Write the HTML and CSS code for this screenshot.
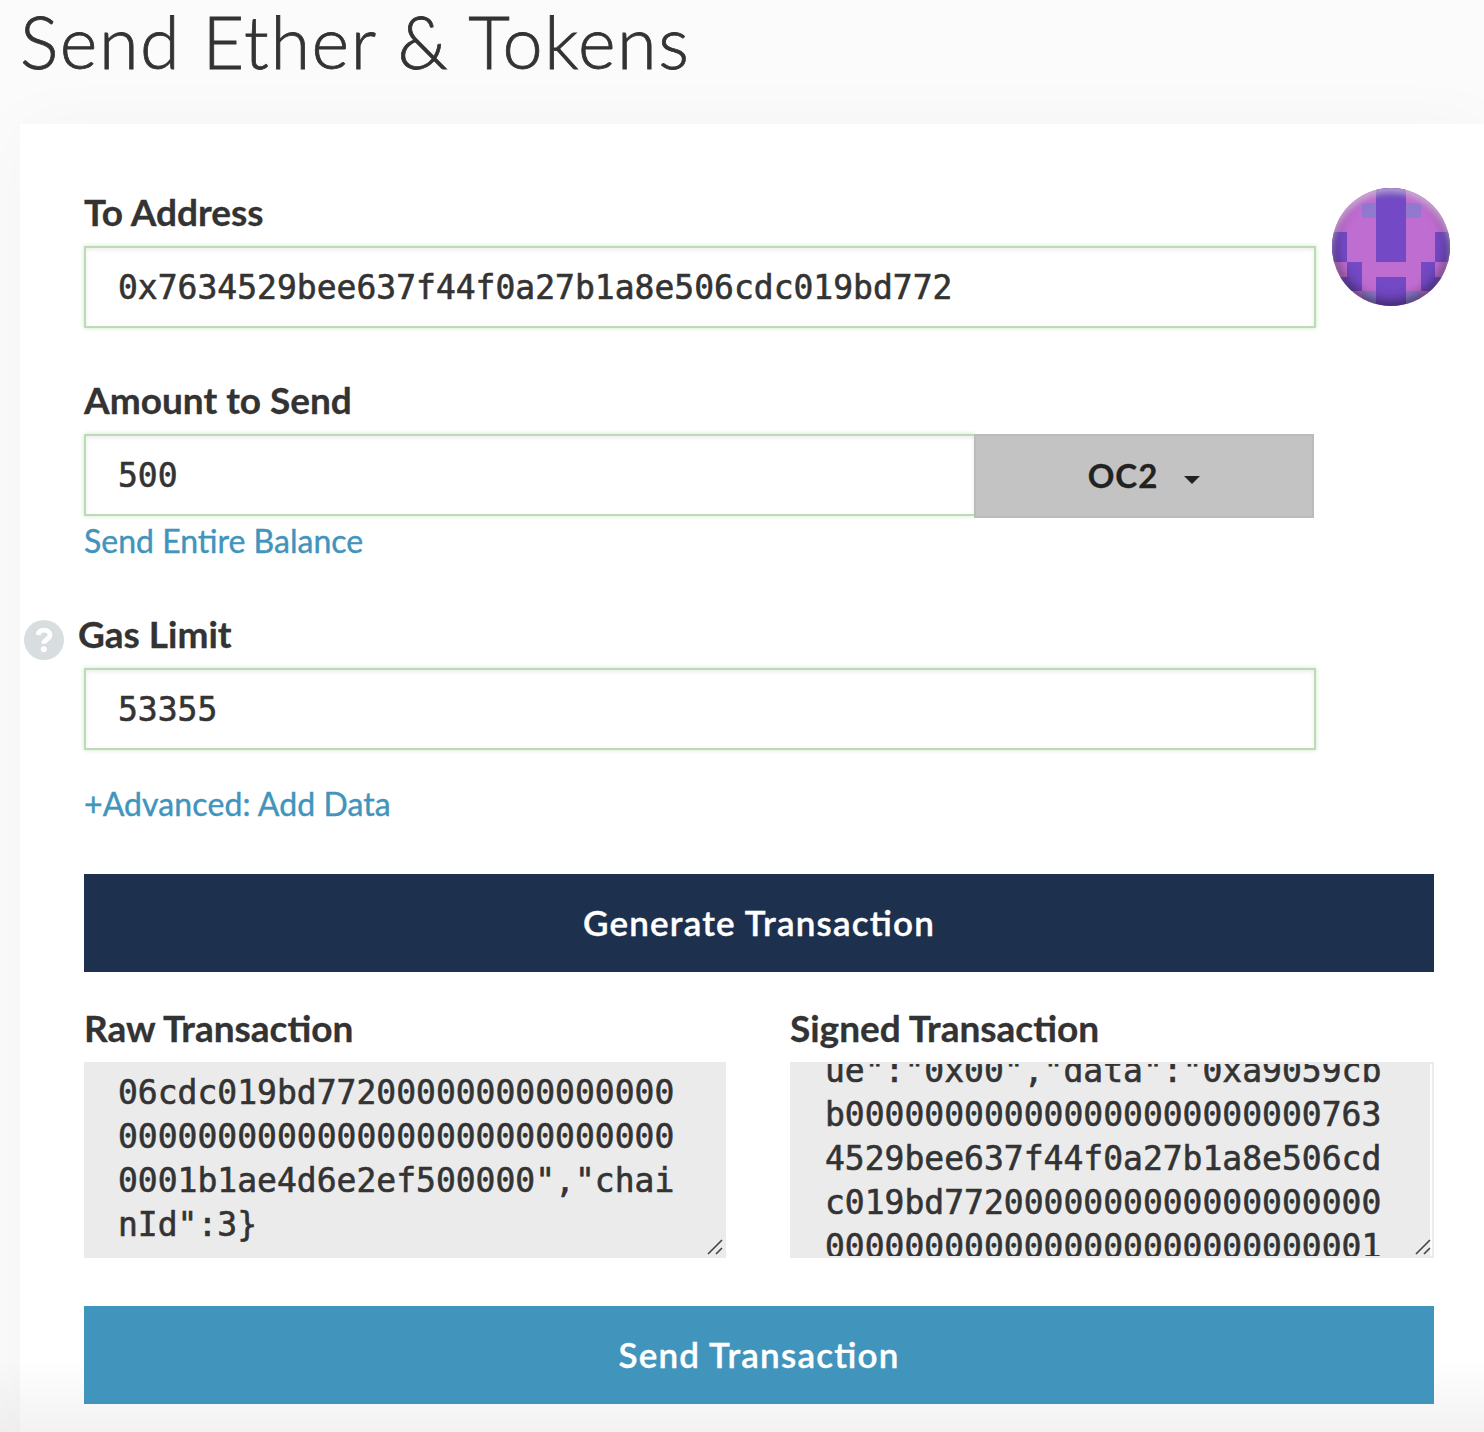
FILE: index.html
```
<!DOCTYPE html>
<html lang="en">
  <head>
    <meta charset="UTF-8" />
    <meta name="viewport" content="width=device-width, initial-scale=1.0" />
    <title>Send Ether &amp; Tokens</title>
    <link rel="stylesheet" href="styles.css">
  </head>
  <body>
    <h1 class="page-title">Send Ether &amp; Tokens</h1>
    <main class="pane">
      <div class="address-row">
        <div class="field">
          <label class="label" for="address">To Address</label>
          <input class="input" id="address" type="text" spellcheck="false" value="0x7634529bee637f44f0a27b1a8e506cdc019bd772" />
        </div>
        <div class="identicon">
          <svg viewBox="0 0 8 8" shape-rendering="crispEdges">
            <rect width="8" height="8" fill="#c06dd2" />
            <path fill="#7349c5" d="M3 0h2v5H3zM0 3h1v2H0zM7 3h1v2H7zM1 5h1v2H0V6h1zM6 5h1v1h1v1H6zM3 6h2v2H3z" />
            <path fill="#9079cf" d="M2 1h1v1H2zM5 1h1v1H5zM2 7h1v1H2zM5 7h1v1H5z" />
          </svg>
        </div>
      </div>

      <div class="amount">
        <label class="label" for="amount">Amount to Send</label>
        <div class="input-group">
          <input class="input" id="amount" type="text" value="500" />
          <button class="unit" type="button"><span>OC2</span> <span class="caret"></span></button>
        </div>
        <a class="link">Send Entire Balance</a>
      </div>

      <div class="gas">
        <div class="gas-head">
          <svg class="help" viewBox="0 0 40 40">
            <circle cx="20" cy="20" r="20" fill="#d8dee0" />
            <path d="M14.200 15C14.600 11.800 17 10.200 20 10.200c3.600 0 6 1.900 6 4.800 0 4.300-6.200 4.100-6.200 8.800" fill="none" stroke="#fff" stroke-width="4.800" />
            <circle cx="19.800" cy="29.300" r="3" fill="#fff" />
          </svg>
          <label class="label" for="gas">Gas Limit</label>
        </div>
        <input class="input" id="gas" type="text" value="53355" />
      </div>

      <a class="link advanced">+Advanced: Add Data</a>

      <button class="btn btn-primary" type="button">Generate Transaction</button>

      <div class="tx-row">
        <div class="tx">
          <div class="label">Raw Transaction</div>
          <div class="output">
            <pre class="output-text">06cdc019bd772000000000000000
0000000000000000000000000000
0001b1ae4d6e2ef500000","chai
nId":3}</pre>
            <svg class="grip" viewBox="0 0 16 16"><path d="M1 15L15 1M9 15l6-6" stroke="#444" stroke-width="1.600" /></svg>
          </div>
        </div>
        <div class="tx">
          <div class="label">Signed Transaction</div>
          <div class="output scrolled">
            <pre class="output-text">ue":"0x00","data":"0xa9059cb
b000000000000000000000000763
4529bee637f44f0a27b1a8e506cd
c019bd7720000000000000000000
0000000000000000000000000001</pre>
            <svg class="grip" viewBox="0 0 16 16"><path d="M1 15L15 1M9 15l6-6" stroke="#444" stroke-width="1.600" /></svg>
          </div>
        </div>
      </div>

      <button class="btn btn-send" type="button">Send Transaction</button>
    </main>
  </body>
</html>
```
FILE: styles.css
```
* {
  box-sizing: border-box;
}
body {
  margin: 0;
  height: 1432px;
  overflow: hidden;
  background: linear-gradient(#fbfbfb 1360px, #efefef 1432px);
  color: #333;
  font-family: Lato, sans-serif;
}
.page-title {
  margin: 0;
  height: 124px;
  padding-left: 20px;
  font-size: 72px;
  font-weight: 300;
  line-height: 82px;
  letter-spacing: 1.6px;
  white-space: nowrap;
  -webkit-text-stroke: 0.8px #333;
}
.pane {
  height: 1308px;
  margin-left: 20px;
  padding: 64px 34px 0 64px;
  background: linear-gradient(#fff 1236px, #f2f2f2 1308px);
  box-shadow: 0 0 64px rgba(0, 0, 0, 0.03);
}
.label {
  display: block;
  font-size: 37px;
  font-weight: 700;
  line-height: 48px;
  white-space: nowrap;
  -webkit-text-stroke: 0.3px #333;
}
.input {
  display: block;
  width: 1232px;
  height: 82px;
  padding: 0 32px;
  border: 2px solid #bddcb5;
  border-radius: 0;
  outline: 0;
  background: #fff;
  box-shadow: inset 0 2px 4px rgba(0, 0, 0, 0.08), 0 0 4px rgba(93, 186, 90, 0.35);
  color: #333;
  font-family: "DejaVu Sans Mono", monospace;
  font-size: 33px;
  -webkit-text-stroke: 0.6px #333;
}
.address-row {
  display: flex;
  gap: 16px;
  height: 188px;
}
.address-row .label {
  margin-bottom: 10px;
}
.identicon {
  position: relative;
  width: 118px;
  height: 118px;
  border-radius: 50%;
  overflow: hidden;
}
.identicon svg {
  display: block;
}
/* shading drawn over the pattern */
.identicon::after {
  content: "";
  position: absolute;
  inset: 0;
  border-radius: 50%;
  box-shadow: inset 0 5px 6px rgba(255, 255, 255, 0.5), inset 0 -3px 14px rgba(0, 0, 0, 0.6);
}
.amount {
  height: 234px;
}
.amount .label {
  margin-bottom: 10px;
}
.input-group {
  display: flex;
  width: 1230px;
  height: 84px;
}
.input-group .input {
  width: 890px;
  border-right: 0;
}
.unit {
  display: flex;
  align-items: center;
  justify-content: center;
  gap: 26px;
  width: 340px;
  padding: 0 0 2px;
  border: 2px solid #bbb;
  background: #c3c3c3;
  color: #222;
  font: 700 33px Lato, sans-serif;
  letter-spacing: 1px;
  -webkit-text-stroke: 0.3px #222;
}
.caret {
  margin-top: 9px;
  border-top: 8px solid #222;
  border-right: 8px solid transparent;
  border-left: 8px solid transparent;
}
.link {
  display: block;
  color: #4194bc;
  font-size: 32px;
  line-height: 46px;
  -webkit-text-stroke: 0.4px #4194bc;
}
.amount .link {
  line-height: 45px;
}
.gas {
  height: 170px;
}
.gas-head {
  display: flex;
  gap: 14px;
  height: 58px;
  margin-left: -60px;
}
.help {
  width: 40px;
  height: 40px;
  margin-top: 10px;
}
.advanced {
  height: 94px;
  line-height: 47px;
  letter-spacing: 0.1px;
}
.btn {
  display: block;
  width: 1350px;
  height: 98px;
  padding: 0 0 2px;
  border: 0;
  color: #fff;
  font: 600 35px Lato, sans-serif;
  letter-spacing: 1.2px;
  font-feature-settings: "liga" 1;
  -webkit-text-stroke: 0.4px #fff;
}
.btn-primary {
  background: #1d314e;
}
.btn-send {
  background: #4194bc;
}
.tx-row {
  display: grid;
  grid-template-columns: 642px 644px;
  gap: 64px;
  height: 334px;
  padding-top: 32px;
}
.tx .label {
  margin-bottom: 10px;
}
.output {
  position: relative;
  height: 196px;
  border: 2px solid #ebebeb;
  background: #ebebeb;
  overflow: hidden;
}
.output-text {
  margin: 7px 0 0 32px;
  font-family: "DejaVu Sans Mono", monospace;
  font-size: 33px;
  line-height: 44px;
  -webkit-text-stroke: 0.6px #333;
}
.scrolled .output-text {
  margin-top: -15px;
  margin-left: 33px;
}
.scrolled {
  box-shadow: inset -2px 0 #fff;
}
.grip {
  position: absolute;
  right: 1px;
  bottom: 1px;
  width: 16px;
  height: 16px;
}
```
